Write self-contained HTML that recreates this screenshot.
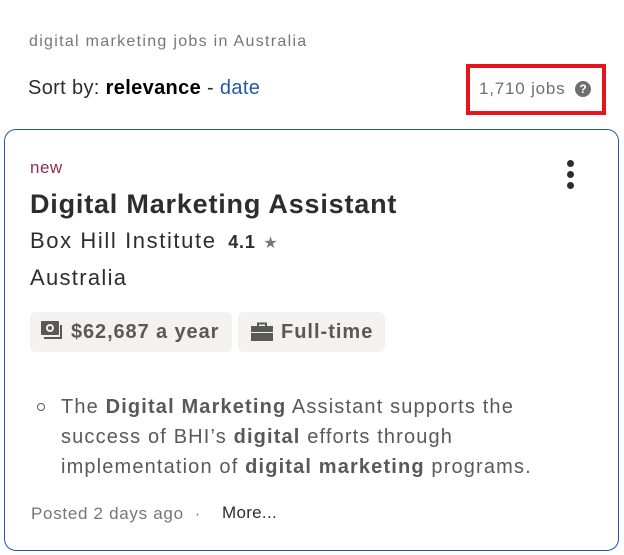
<!DOCTYPE html>
<html><head><style>
body{margin:0;width:624px;height:555px;background:#fff;font-family:"Liberation Sans",sans-serif;position:relative;overflow:hidden}
.a{position:absolute;white-space:nowrap}
</style></head><body>
<div class="a" style="left:29px;top:33px;font-size:16px;color:#767676;letter-spacing:1.3px">digital marketing jobs in Australia</div>
<div class="a" style="left:28px;top:77px;font-size:20px;color:#2d2d2d;letter-spacing:0.35px">Sort by: <b style="color:#000">relevance</b> - <span style="color:#2557a7">date</span></div>
<div class="a" style="left:466px;top:64px;width:132px;height:43px;border:4px solid #e8141d"></div>
<div class="a" style="left:479px;top:79px;font-size:17px;color:#6f6f6f;letter-spacing:0.8px">1,710 jobs</div>
<div class="a" style="left:575px;top:81px;width:16px;height:16px;border-radius:50%;background:#6f6f6f;color:#fff;font-size:12px;font-weight:bold;text-align:center;line-height:16px">?</div>
<div class="a" style="left:4px;top:129px;width:613px;height:420px;border:1px solid #2557a7;border-radius:12px"></div>
<div class="a" style="left:30px;top:158px;font-size:17px;color:#8b2e5a;letter-spacing:0.5px">new</div>
<div class="a" style="left:567px;top:160px;width:7px;height:7px;border-radius:50%;background:#2d2d2d"></div>
<div class="a" style="left:567px;top:171px;width:7px;height:7px;border-radius:50%;background:#2d2d2d"></div>
<div class="a" style="left:567px;top:182px;width:7px;height:7px;border-radius:50%;background:#2d2d2d"></div>
<div class="a" style="left:30px;top:189px;font-size:27px;font-weight:bold;color:#2d2d2d;letter-spacing:0.8px">Digital Marketing Assistant</div>
<div class="a" style="left:30px;top:228px;font-size:22px;color:#2d2d2d;letter-spacing:1.6px">Box Hill Institute <span style="font-size:18px;font-weight:bold;margin-left:4px;letter-spacing:0.8px">4.1</span> <span style="font-size:16px;color:#767676">★</span></div>
<div class="a" style="left:30px;top:265px;font-size:22px;color:#2d2d2d;letter-spacing:1.3px">Australia</div>
<div class="a" style="left:30px;top:312px;width:202px;height:40px;background:#f3f2f1;border-radius:6px"></div>
<div class="a" style="left:238px;top:312px;width:147px;height:40px;background:#f3f2f1;border-radius:6px"></div>
<svg class="a" style="left:41px;top:321px" width="22" height="20" viewBox="0 0 22 20"><rect x="0" y="0" width="18" height="14" rx="1" fill="#595959"/><circle cx="9" cy="7" r="4" fill="#f3f2f1"/><circle cx="9" cy="7" r="2" fill="#595959"/><path d="M20 4v13H3" stroke="#595959" stroke-width="2" fill="none"/></svg>
<div class="a" style="left:71px;top:321px;font-size:20px;font-weight:bold;color:#595959;letter-spacing:0.9px">$62,687 a year</div>
<svg class="a" style="left:251px;top:322px" width="22" height="19" viewBox="0 0 22 19"><path d="M7 4V1.5h8V4" stroke="#595959" stroke-width="2" fill="none"/><rect x="0" y="4" width="22" height="6" fill="#595959"/><rect x="0" y="11" width="22" height="8" fill="#595959"/></svg>
<div class="a" style="left:281px;top:321px;font-size:20px;font-weight:bold;color:#595959;letter-spacing:1px">Full-time</div>
<div class="a" style="left:37px;top:403px;width:6px;height:6px;border:1.3px solid #595959;border-radius:50%"></div>
<div class="a" style="left:61px;top:392px;font-size:20px;line-height:30px;color:#595959;letter-spacing:1.15px">The <b>Digital Marketing</b> Assistant supports the<br>success of BHI’s <b>digital</b> efforts through<br>implementation of <b>digital marketing</b> programs.</div>
<div class="a" style="left:31px;top:504px;font-size:17px;color:#767676;letter-spacing:0.7px">Posted 2 days ago &nbsp;·</div>
<div class="a" style="left:222px;top:503px;font-size:17px;color:#2d2d2d;letter-spacing:0.3px">More...</div>
</body></html>
